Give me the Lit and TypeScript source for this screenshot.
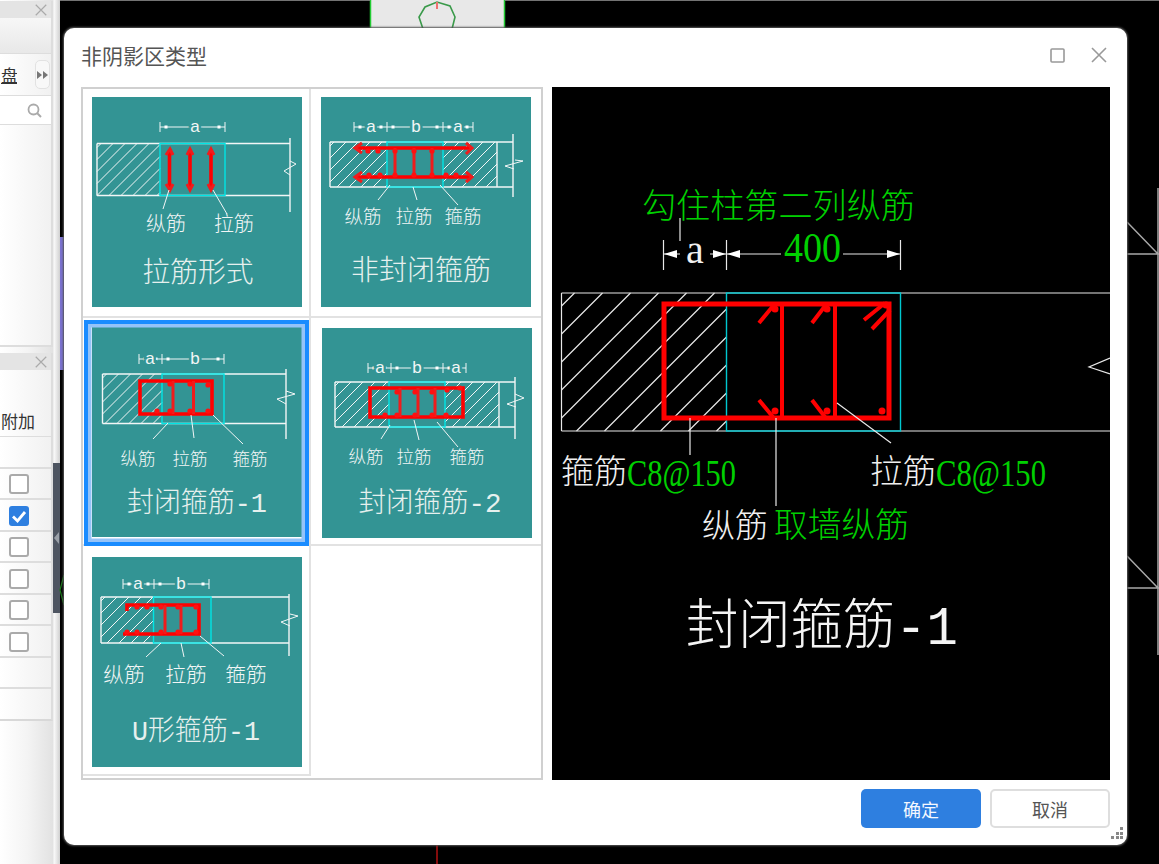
import {LitElement, css, html, svg} from 'lit';
import {customElement, state} from 'lit/decorators.js';

// 45 degree section hatching inside a rectangle, as one path
function hatch(x0: number, y0: number, x1: number, y1: number, step: number, phase = 0) {
  let d = '';
  for (let c = x0 + y0 + phase; c < x1 + y1; c += step) {
    const ax = Math.max(x0, c - y1);
    const bx = Math.min(x1, c - y0);
    if (bx <= ax) continue;
    d += `M${ax} ${c - ax}L${bx} ${c - bx}`;
  }
  return d;
}

interface ThumbLabel {
  x: number;
  text: string;
}

interface Thumb {
  title: string;
  titleX: number;
  titleY: number;
  titleLen: number;
  x: number;
  y: number;
  pad: string;
  dimY: number;
  ticks: number[];
  dimLabels: ThumbLabel[];
  wall: [number, number, number, number];
  stopX: number;
  stop: [number, number];
  hatches: [number, number][];
  cyan: [number, number];
  rebar: string;
  rebarThin: string;
  dots: [number, number][];
  breakMark: string;
  leaders: string;
  labelY: number;
  labelSize: number;
  labels: ThumbLabel[];
}

const THUMBS: Thumb[] = [
  {
    title: '拉筋形式', titleX: 198, titleY: 282, titleLen: 111, x: 92, y: 97, pad: '8px 0 0 9px',
    dimY: 127, ticks: [160, 225], dimLabels: [{x: 195, text: 'a'}],
    wall: [97, 290, 143.5, 195.5], stopX: 290, stop: [138, 212], hatches: [[97, 160]], cyan: [160, 225],
    rebar: 'M169.5 151V188M190 151V188M211 151V188',
    rebarThin: 'M166 155L170 149L173 155M166 184L170 190L173 184M187 155L190 149L193 155M187 184L190 190L193 184M208 155L211 149L214 155M208 184L211 190L214 184',
    dots: [],
    breakMark: 'M290 161L296 164L284 171L290 175',
    leaders: 'M169 190L163 209M213 190L227 214', labelY: 231, labelSize: 20,
    labels: [{x: 166, text: '纵筋'}, {x: 234, text: '拉筋'}],
  },
  {
    title: '非封闭箍筋', titleX: 421, titleY: 280, titleLen: 140, x: 321, y: 97, pad: '8px 0 0 10px',
    dimY: 127, ticks: [354, 387, 443, 473], dimLabels: [{x: 371, text: 'a'}, {x: 416, text: 'b'}, {x: 458, text: 'a'}],
    wall: [330, 497, 142, 187], stopX: 513, stop: [134, 197], hatches: [[330, 387], [443, 497]], cyan: [387, 443],
    rebar: 'M356 148H472M356 177H472',
    rebarThin: 'M395 148V177M414 148V177M432 148V177M362 143L355 148L362 153M362 172L355 177L362 182M466 143L472 148L466 154M466 172L472 177L466 182',
    dots: [[368, 151], [378, 151], [395, 151], [414, 151], [432, 151], [369, 175], [380, 175], [395, 175], [414, 175], [432, 175], [446, 175], [456, 175]],
    breakMark: 'M515 160L523 161L505 166L514 169',
    leaders: 'M390 185L378 200M413 187L417 200M440 185L458 205', labelY: 223, labelSize: 18.5,
    labels: [{x: 363, text: '纵筋'}, {x: 414, text: '拉筋'}, {x: 463, text: '箍筋'}],
  },
  {
    title: '封闭箍筋-1', titleX: 197, titleY: 512, titleLen: 140, x: 92, y: 327, pad: '9px 0 0 9px',
    dimY: 359, ticks: [139, 162, 224], dimLabels: [{x: 150, text: 'a'}, {x: 195, text: 'b'}],
    wall: [102.5, 286, 374, 423.5], stopX: 286, stop: [369, 439], hatches: [[102.5, 162]], cyan: [162, 224],
    rebar: 'M140 381H212V414H140Z', rebarThin: 'M173 381V414M193.5 381V414',
    dots: [[170, 384], [190, 384], [208, 385], [157, 411], [170, 411], [190, 411], [208, 411]],
    breakMark: 'M286 391L295 394L277 399L286 404',
    leaders: 'M168 423L153 439M191 415L194 438M213 415L243 444', labelY: 465, labelSize: 17.5,
    labels: [{x: 138, text: '纵筋'}, {x: 190, text: '拉筋'}, {x: 250, text: '箍筋'}],
  },
  {
    title: '封闭箍筋-2', titleX: 430, titleY: 512, titleLen: 143, x: 322, y: 328, pad: '10px 0 0 11px',
    dimY: 368, ticks: [368, 391, 443, 466], dimLabels: [{x: 380, text: 'a'}, {x: 417, text: 'b'}, {x: 456, text: 'a'}],
    wall: [335, 499, 382, 427], stopX: 515, stop: [377, 439], hatches: [[335, 389], [445, 499]], cyan: [389, 445],
    rebar: 'M370 388H463V417H370Z', rebarThin: 'M400 388V417M418 388V417M435 388V417',
    dots: [[385, 415], [397, 392], [397, 415], [415, 392], [415, 415], [432, 392], [432, 415], [446, 415], [447, 390], [460, 388]],
    breakMark: 'M515 394L524 398L507 404L516 407',
    leaders: 'M390 425L381 439M414 420L419 440M437 422L458 447', labelY: 463, labelSize: 17.5,
    labels: [{x: 366, text: '纵筋'}, {x: 414, text: '拉筋'}, {x: 467, text: '箍筋'}],
  },
  {
    title: 'U形箍筋-1', titleX: 196, titleY: 740, titleLen: 128, x: 92, y: 557, pad: '11px 0 0 9px',
    dimY: 584, ticks: [123, 154, 209], dimLabels: [{x: 138, text: 'a'}, {x: 181, text: 'b'}],
    wall: [101, 289, 597, 643], stopX: 289, stop: [594, 656], hatches: [[101, 153.5]], cyan: [153.5, 211],
    rebar: 'M127 611V605H199V634H123', rebarThin: 'M165 605V634M181 605V634',
    dots: [[137, 607], [147, 607], [161, 607], [178, 607], [196, 607], [127, 632], [137, 632], [161, 632], [178, 632], [196, 632]],
    breakMark: 'M290 614L298 616L281 622L290 626',
    leaders: 'M161 643L146 657M181 643L184 657M200 636L224 656', labelY: 682, labelSize: 20.8,
    labels: [{x: 124, text: '纵筋'}, {x: 186, text: '拉筋'}, {x: 246, text: '箍筋'}],
  },
];

function thumbSvg(t: Thumb) {
  const [wx0, wx1, wy0, wy1] = t.wall;
  const first = t.ticks[0];
  const last = t.ticks[t.ticks.length - 1];
  const ticks = t.ticks.map((x) => `M${x} ${t.dimY - 5}V${t.dimY + 5}`).join('');
  const dimDots = t.ticks.flatMap((x, i) => {
    const out: number[] = [];
    if (i > 0) out.push(x - 6);
    if (i < t.ticks.length - 1) out.push(x + 6);
    return out;
  });
  return html`
    <svg class="thumb" width="210" height="210" viewBox="${t.x} ${t.y} 210 210">
      <rect class="thumb-bg" x=${t.x} y=${t.y} width="210" height="210"></rect>
      ${t.hatches.map(([a, b]) => svg`<path class="line" d=${hatch(a, wy0, b, wy1, 12, 4)}></path>`)}
      <path class="line wide" d="M${wx0} ${wy0}H${t.stopX}M${wx0} ${wy1}H${t.stopX}M${wx0} ${wy0}V${wy1}M${wx1} ${wy0}V${wy1}M${t.stopX} ${t.stop[0]}V${t.stop[1]}"></path>
      <path class="line" d=${t.breakMark}></path>
      <rect class="cyan" x=${t.cyan[0]} y=${wy0} width=${t.cyan[1] - t.cyan[0]} height=${wy1 - wy0}></rect>
      <path class="rebar" d=${t.rebar}></path>
      <path class="rebar-thin" d=${t.rebarThin}></path>
      ${t.dots.map(([x, y]) => svg`<circle cx=${x} cy=${y} r="2.6" fill="#ff1010"></circle>`)}
      <path class="line" d=${t.leaders}></path>
      <path class="line" d="M${first} ${t.dimY}H${last}${ticks}"></path>
      ${dimDots.map((x) => svg`<rect x=${x - 1.5} y=${t.dimY - 1.5} width="3" height="3" fill="#fff"></rect>`)}
      ${t.dimLabels.map((l) => svg`<text class="dim-label" x=${l.x} y=${t.dimY + 5} text-anchor="middle">${l.text}</text>`)}
      ${t.labels.map((l) => svg`<text class="thumb-label" x=${l.x} y=${t.labelY} font-size=${t.labelSize} text-anchor="middle">${l.text}</text>`)}
      <text class="thumb-title" x=${t.titleX} y=${t.titleY} text-anchor="middle" textLength=${t.titleLen} lengthAdjust="spacingAndGlyphs">${t.title}</text>
    </svg>
  `;
}

function previewSvg() {
  return html`
    <svg class="preview" width="558" height="693" viewBox="552 87 558 693">
      <path class="cad" d=${hatch(561.5, 293, 726.5, 431, 28, 13)}></path>
      <path class="cad" d="M561.5 293H1110M561.5 431H1110M561.5 293V431"></path>
      <path class="cad" d="M1110 358L1089 367L1110 374"></path>
      <rect class="cad-cyan" x="726.5" y="293" width="174" height="138"></rect>

      <path class="cad-red" d="M664 304H889V418H664Z"></path>
      <path class="cad-red mid" d="M782 304V418M835 304V418"></path>
      <path class="cad-red mid" d="M759 323L773 306M812 323L825 306M864 320L885 303M872 329L890 310M759 400L773 417M812 400L825 417"></path>
      <circle cx="775" cy="309" r="3.5" fill="#f00"></circle>
      <circle cx="827" cy="309" r="3.5" fill="#f00"></circle>
      <circle cx="886" cy="305" r="3.5" fill="#f00"></circle>
      <circle cx="775" cy="411" r="3.5" fill="#f00"></circle>
      <circle cx="827" cy="411" r="3.5" fill="#f00"></circle>
      <circle cx="882" cy="411" r="3.5" fill="#f00"></circle>

      <path class="cad" d="M680 218V241M663.5 240V270M726.5 240V270M900.5 240V270"></path>
      <path class="cad" d="M664 254H680M710 254H726M727 254H781M843 254H900"></path>
      <path class="arrow" d="M664 254L677 250V258ZM726 254L713 250V258ZM727 254L740 250V258ZM900 254L887 250V258Z"></path>
      <path class="cad" d="M690 418V455M776 418V506M837 403L891 443"></path>

      <text class="cad-text green" x="642" y="218" font-size="34" textLength="273" lengthAdjust="spacingAndGlyphs">勾住柱第二列纵筋</text>
      <text class="cad-text" x="695" y="263" font-size="40" text-anchor="middle">a</text>
      <text class="cad-text green" x="784" y="262" font-size="42" textLength="57" lengthAdjust="spacingAndGlyphs">400</text>

      <text class="cad-text" x="561" y="483" font-size="33">箍筋</text>
      <text class="cad-text green" x="627" y="486" font-size="38" textLength="109" lengthAdjust="spacingAndGlyphs">C8@150</text>
      <text class="cad-text" x="870" y="483" font-size="33">拉筋</text>
      <text class="cad-text green" x="936" y="486" font-size="38" textLength="110" lengthAdjust="spacingAndGlyphs">C8@150</text>
      <text class="cad-text" x="702" y="537" font-size="33">纵筋</text>
      <text class="cad-text green" x="774" y="537" font-size="34" textLength="135" lengthAdjust="spacingAndGlyphs">取墙纵筋</text>
      <text class="cad-title" x="686" y="644" font-size="54" textLength="272" lengthAdjust="spacingAndGlyphs">封闭箍筋-1</text>
    </svg>
  `;
}

@customElement('app-root')
export class AppRoot extends LitElement {
  static override styles = css`
    :host {
      display: block;
      width: 1159px;
      height: 864px;
      overflow: hidden;
      font-family: 'Noto Sans CJK SC', 'Noto Sans', sans-serif;
    }

    .stage {
      position: relative;
      display: flex;
      width: 100%;
      height: 100%;
      background: #000;
    }

    /* left dock */
    .sidebar {
      width: 60px;
      flex: none;
      display: flex;
      flex-direction: column;
      gap: 6px;
      padding-top: 1px;
      box-sizing: border-box;
      background: linear-gradient(90deg, #fff 0, #f4f4f4 45%, #e2e2e2 53px, #fafafa 54px, #d0d0d0 60px);
    }
    .panel {
      width: 53px;
      box-sizing: border-box;
      overflow: hidden;
      display: flex;
      flex-direction: column;
      flex: none;
      background: linear-gradient(90deg, #fff, #f1f1f1);
      border-right: 2px solid #ddd;
    }
    .panel.top {
      height: 346px;
      border-bottom: 2px solid #ddd;
    }
    .panel.bottom {
      height: 368px;
      border-bottom: 2px solid #d8d8d8;
    }
    .panel-head {
      height: 17px;
      flex: none;
      display: flex;
      align-items: center;
      justify-content: flex-end;
      padding-right: 4px;
      background: #e4e4e4;
    }
    .panel-band {
      height: 35px;
      flex: none;
      background: linear-gradient(180deg, #f7f7f7, #e8e8e8);
      border-bottom: 1px solid #ddd;
    }
    .panel-tools {
      height: 41px;
      flex: none;
      display: flex;
      align-items: center;
      justify-content: flex-end;
      gap: 18px;
      border-bottom: 1px solid #ddd;
    }
    .panel-tools .word {
      font-size: 17px;
      color: #333;
      text-decoration: underline;
      width: 16px;
      overflow: hidden;
      white-space: nowrap;
    }
    .more {
      width: 15px;
      height: 29px;
      margin-right: 1px;
      display: flex;
      align-items: center;
      justify-content: center;
      border: 1px solid #e2e2e2;
      border-radius: 5px;
      box-sizing: border-box;
      background: #f8f8f8;
    }
    .panel-search {
      height: 28px;
      flex: none;
      display: flex;
      align-items: center;
      justify-content: flex-end;
      padding-right: 9px;
      border-bottom: 1px solid #ddd;
      background: #fff;
    }
    .grid-head {
      height: 67px;
      flex: none;
      box-sizing: border-box;
      padding: 36px 0 0 1px;
      font-size: 17px;
      line-height: 30px;
      color: #333;
      white-space: nowrap;
      border-bottom: 1px solid #ddd;
    }
    .grid-row {
      height: 31.5px;
      flex: none;
      box-sizing: border-box;
      display: flex;
      align-items: center;
      padding: 2px 0 0 9px;
      border-bottom: 2px solid #ddd;
    }
    .check {
      width: 20px;
      height: 20px;
      box-sizing: border-box;
      border: 2px solid #aaa;
      border-radius: 3px;
      background: #fff;
    }
    .check.on {
      border: none;
      background: #2e7fe0;
    }
    .check svg {
      display: block;
    }
    .splitter {
      position: absolute;
      left: 53px;
      top: 463px;
      width: 7px;
      height: 150px;
      display: flex;
      align-items: center;
      justify-content: center;
      background: #4e5561;
    }

    /* cad view behind the dialog */
    .canvas {
      position: absolute;
      left: 0;
      top: 0;
    }
    .bg-line {
      fill: none;
      stroke: #a8a8a8;
      stroke-width: 1.5;
    }

    /* dialog */
    .dialog {
      position: absolute;
      left: 64px;
      top: 28px;
      width: 1063px;
      height: 817px;
      box-sizing: border-box;
      padding: 0 17px;
      display: flex;
      flex-direction: column;
      background: #fff;
      border-radius: 10px;
      box-shadow: 0 0 2px 1px #555;
    }
    .dialog-head {
      height: 59px;
      flex: none;
      box-sizing: border-box;
      padding: 0 3px 5px 0;
      display: flex;
      align-items: center;
      justify-content: space-between;
    }
    .dialog-title {
      font-size: 21px;
      color: #555;
    }
    .win-btns {
      display: flex;
      align-items: center;
      gap: 26px;
    }
    .dialog-body {
      display: flex;
      gap: 9px;
      height: 693px;
      flex: none;
    }
    .list {
      width: 462px;
      box-sizing: border-box;
      border: 2px solid #d0d0d0;
      display: grid;
      grid-template-columns: 228px 230px;
      grid-template-rows: 229px 228px 230px;
      align-content: start;
    }
    .cell {
      position: relative;
      box-sizing: border-box;
      border-bottom: 2px solid #e2e2e2;
    }
    .cell:nth-child(odd) {
      border-right: 2px solid #e2e2e2;
    }
    .cell.empty {
      border: none;
    }
    .cell.selected::after {
      content: '';
      position: absolute;
      left: 1px;
      right: 0;
      top: 2px;
      bottom: -2px;
      box-sizing: border-box;
      border: 4px solid #1a8cff;
      box-shadow: inset 0 0 0 3.5px #95c3f8;
    }
    .thumb {
      display: block;
    }
    .thumb-bg {
      fill: #339494;
    }
    .line {
      fill: none;
      stroke: #f2f6f6;
      stroke-width: 1;
    }
    .line.wide {
      stroke-width: 1.4;
    }
    .cyan {
      fill: none;
      stroke: #00e5e5;
      stroke-width: 1.4;
    }
    .rebar {
      fill: none;
      stroke: #f00;
      stroke-width: 3.6;
    }
    .rebar-thin {
      fill: none;
      stroke: #f01c1c;
      stroke-width: 3;
    }
    .dim-label {
      font-family: 'Liberation Sans', 'Noto Sans', sans-serif;
      font-size: 17px;
      fill: #f2f6f6;
      stroke: #339494;
      stroke-width: 5px;
      paint-order: stroke;
    }
    .thumb-label {
      fill: #f2f6f6;
      font-weight: 300;
    }
    .thumb-title {
      font-family: 'Liberation Mono', 'Noto Sans CJK SC', monospace;
      font-size: 28px;
      font-weight: 300;
      fill: #e6f0ee;
    }
    .preview {
      display: block;
      background: #000;
    }
    .cad {
      fill: none;
      stroke: #e8e8e8;
      stroke-width: 1.2;
    }
    .cad-cyan {
      fill: none;
      stroke: #00c8d0;
      stroke-width: 1.4;
    }
    .cad-red {
      fill: none;
      stroke: #f00;
      stroke-width: 5;
    }
    .cad-red.mid {
      stroke-width: 4;
    }
    .arrow {
      fill: #fff;
    }
    .cad-text {
      font-family: 'Liberation Serif', 'Noto Sans CJK SC', serif;
      font-weight: 300;
      fill: #f0f0f0;
    }
    .cad-text.green {
      fill: #00d000;
    }
    .cad-title {
      font-family: 'Liberation Mono', 'Noto Sans CJK SC', monospace;
      font-weight: 300;
      fill: #f4f4f4;
    }
    .dialog-foot {
      display: flex;
      justify-content: flex-end;
      gap: 9px;
      margin-top: 9px;
    }
    button {
      width: 120px;
      height: 39px;
      box-sizing: border-box;
      border-radius: 5px;
      font-family: inherit;
      font-size: 18px;
      padding: 0;
    }
    .primary {
      border: none;
      background: #2e7fe0;
      color: #f4f8ff;
    }
    .plain {
      border: 2px solid #dedede;
      background: #fff;
      color: #555;
    }
    .grip {
      position: absolute;
      right: 3px;
      bottom: 5px;
    }
  `;

  @state() private selected = 2;

  private closeIcon(size: number, color: string) {
    return html`<svg width=${size} height=${size} viewBox="0 0 16 16">
      <path d="M1 1L15 15M15 1L1 15" fill="none" stroke=${color} stroke-width="1.6"></path>
    </svg>`;
  }

  private renderSidebar() {
    const checks = [false, true, false, false, false, false, null, null];
    return html`
      <div class="sidebar">
        <div class="panel top">
          <div class="panel-head">${this.closeIcon(12, '#aaa')}</div>
          <div class="panel-band"></div>
          <div class="panel-tools">
            <span class="word">盘</span>
            <span class="more">
              <svg width="11" height="8" viewBox="0 0 11 8"><path d="M0 0L5 4L0 8ZM6 0L11 4L6 8Z" fill="#777"></path></svg>
            </span>
          </div>
          <div class="panel-search">
            <svg width="15" height="15" viewBox="0 0 15 15">
              <circle cx="6.5" cy="6.5" r="5" fill="none" stroke="#aaa" stroke-width="1.8"></circle>
              <path d="M10 10L14 14" stroke="#aaa" stroke-width="2"></path>
            </svg>
          </div>
        </div>
        <div class="panel bottom">
          <div class="panel-head">${this.closeIcon(12, '#aaa')}</div>
          <div class="grid-head">附加</div>
          <div class="grid-row"></div>
          ${checks.map((c) => html`
            <div class="grid-row">
              ${c === null
                ? null
                : c
                ? html`<span class="check on">
                    <svg width="20" height="20" viewBox="0 0 20 20"><path d="M4 10.5L8.5 15L16 6" fill="none" stroke="#fff" stroke-width="2.8"></path></svg>
                  </span>`
                : html`<span class="check"></span>`}
            </div>
          `)}
        </div>
      </div>
      <div class="splitter">
        <svg width="5" height="12" viewBox="0 0 5 12"><path d="M5 0L0 6L5 12Z" fill="#9aa0a8"></path></svg>
      </div>
    `;
  }

  private renderCanvas() {
    return html`
      <svg class="canvas" width="1159" height="864" viewBox="0 0 1159 864">
        <rect x="60" y="237" width="6" height="133" fill="#7b72d0"></rect>
        <rect x="370" y="0" width="135" height="29" fill="#e8e8e8"></rect>
        <path d="M370.5 0V29M504.5 0V29" stroke="#22cc33" stroke-width="1.5"></path>
        <path d="M423 29L419 17L425 7L437 2L450 6L455 17L452 29" fill="none" stroke="#3a9a4a" stroke-width="1.6"></path>
        <path d="M437 2V9" stroke="#f07070" stroke-width="2"></path>
        <path d="M60 0H370M505 0H1159" stroke="#999" stroke-width="1.5"></path>
        <path d="M437 845V864" stroke="#b01010" stroke-width="1.5"></path>
        <path d="M64 575L60 590L64 605" fill="none" stroke="#1a7a1a" stroke-width="1.2"></path>
        <path class="bg-line" d="M1127 222L1158 254M1127 254H1159M1158 188V655M1127 556L1158 588M1127 588H1159"></path>
      </svg>
    `;
  }

  override render() {
    return html`
      <div class="stage">
        ${this.renderSidebar()} ${this.renderCanvas()}
        <div class="dialog">
          <div class="dialog-head">
            <span class="dialog-title">非阴影区类型</span>
            <span class="win-btns">
              <svg width="15" height="15" viewBox="0 0 15 15"><rect x="1" y="1" width="13" height="13" rx="1" fill="none" stroke="#999" stroke-width="1.6"></rect></svg>
              ${this.closeIcon(16, '#999')}
            </span>
          </div>
          <div class="dialog-body">
            <div class="list">
              ${THUMBS.map((t, i) => html`
                <div class="cell ${i === this.selected ? 'selected' : ''}" style="padding:${t.pad}">${thumbSvg(t)}</div>
              `)}
              <div class="cell empty"></div>
            </div>
            ${previewSvg()}
          </div>
          <div class="dialog-foot">
            <button class="primary">确定</button>
            <button class="plain">取消</button>
          </div>
          <svg class="grip" width="13" height="13" viewBox="0 0 13 13" fill="#888">
            <rect x="9" y="0" width="3" height="3"></rect>
            <rect x="5" y="5" width="3" height="3"></rect>
            <rect x="9" y="5" width="3" height="3"></rect>
            <rect x="0" y="9" width="3" height="3"></rect>
            <rect x="5" y="9" width="3" height="3"></rect>
            <rect x="9" y="9" width="3" height="3"></rect>
          </svg>
        </div>
      </div>
    `;
  }
}
